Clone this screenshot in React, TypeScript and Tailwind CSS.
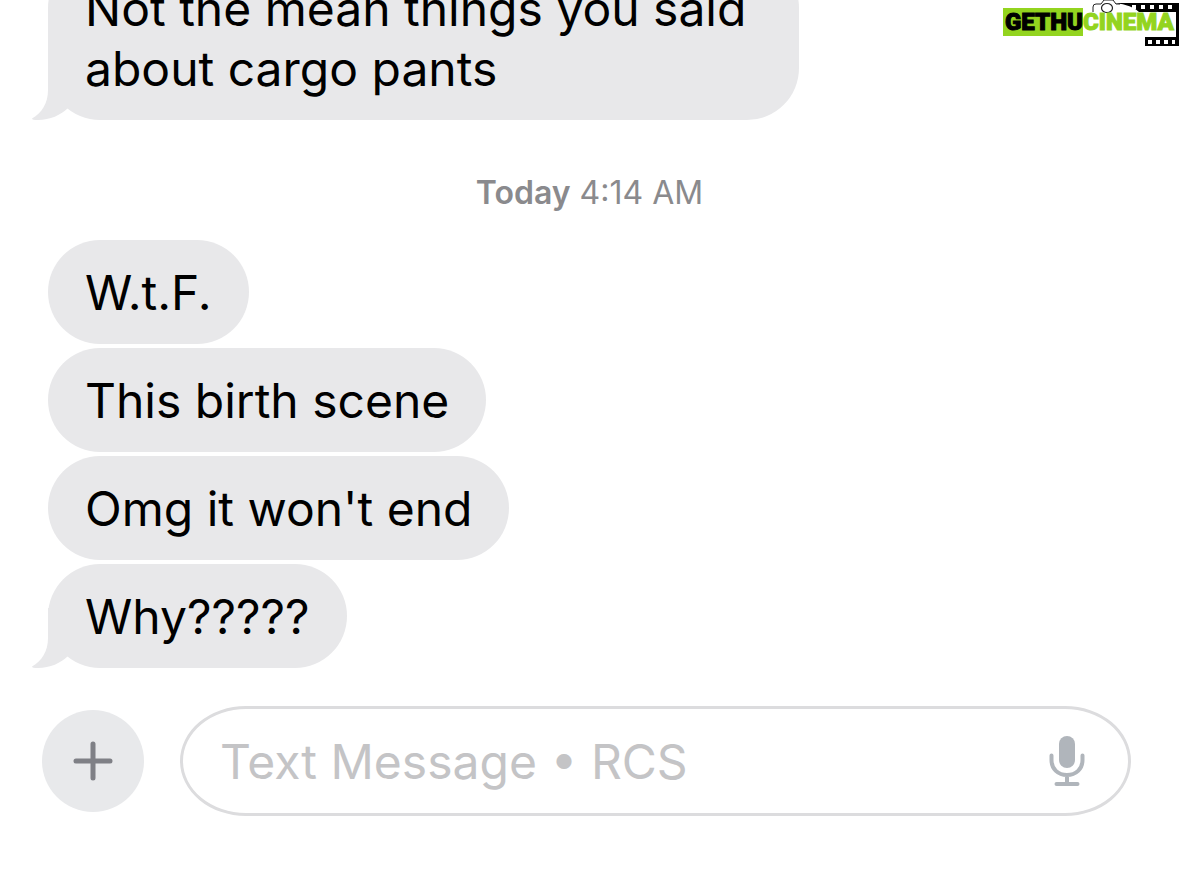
import type { ReactNode } from "react";

const messages = ["W.t.F.", "This birth scene", "Omg it won't end", "Why?????"];

function Tail() {
    return (
        <svg
            className="absolute bottom-0 -left-4"
            width="40"
            height="60"
            viewBox="0 0 40 60"
            fill="#e8e8ea"
            aria-hidden="true"
        >
            <path d="M16 0V30C16 43 10 53 0 58.500C0 59.500 2 60 6 60C18 60 29 55 36 48L40 40V0Z" />
        </svg>
    );
}

function Bubble({ children, tail = false }: { children: ReactNode; tail?: boolean }) {
    return (
        <li className="relative w-fit max-w-[751px] rounded-[52px] bg-[#e8e8ea] px-[37px] pt-[23px] pb-[21px] text-[48px] leading-[60px] text-black">
            {tail && <Tail />}
            <p className="relative">{children}</p>
        </li>
    );
}

function Watermark() {
    return (
        <div className="absolute top-0 right-0 h-12 w-44">
            <svg className="absolute inset-0" width="176" height="48" viewBox="0 0 176 48" fill="none" aria-hidden="true">
                <path d="M90 12V7Q90 4 93 4H98L101 0H110L113 4H117" stroke="#222" strokeWidth="1" />
                <ellipse cx="104" cy="8" rx="5.500" ry="4.500" stroke="#222" strokeWidth="1.200" />
                <path d="M112 3H176V46H142V37H173V12H136Q129 5 112 3Z" fill="#000" />
                <path
                    d="M129 5h4v4h-4zM138 5h4v4h-4zM147 5h4v4h-4zM156 5h4v4h-4zM165 5h4v4h-4zM145 40h4v4h-4zM153 40h4v4h-4zM161 40h4v4h-4zM169 40h3v4h-3z"
                    fill="#fff"
                />
            </svg>
            <p className="relative mt-2 flex font-[Roboto,sans-serif] text-[24px] leading-7 font-black">
                <span className="bg-[#93d41f] pl-0.5 text-black [-webkit-text-stroke:1px_#000]">GETHU</span>
                <span className="text-[#93d41f] [-webkit-text-stroke:1px_#93d41f]">CINEMA</span>
            </p>
        </div>
    );
}

function Composer() {
    return (
        <form className="mt-[38px] flex items-center gap-9 pr-12 pl-[42px]">
            <button
                type="button"
                aria-label="Add attachment"
                className="flex size-[102px] shrink-0 items-center justify-center rounded-full bg-[#e8e9eb]"
            >
                <svg width="40" height="40" viewBox="0 0 40 40" stroke="#7f8086" strokeWidth="5" strokeLinecap="round">
                    <path d="M20 3V37M3 20H37" />
                </svg>
            </button>
            <div className="flex h-[110px] min-w-0 flex-1 items-center rounded-[66px/55px] border-3 border-[#dcdcde] pr-[43px] pl-[37px]">
                <input
                    type="text"
                    aria-label="Message"
                    placeholder="Text Message • RCS"
                    className="min-w-0 flex-1 pt-0.5 text-[48px] leading-[60px] text-black outline-none placeholder:text-[#c4c4c6]"
                />
                <button type="button" aria-label="Dictate" className="shrink-0">
                    <svg width="36" height="52" viewBox="0 0 36 52" fill="none" stroke="#b0b5bb" strokeLinecap="round">
                        <rect x="10" y="1" width="16" height="32" rx="8" fill="#b0b5bb" stroke="none" />
                        <path d="M2.500 20.500V25C2.500 34 9 40 18 40S33.500 34 33.500 25V20.500M18 40V49M7.500 49H28.500" strokeWidth="4" />
                    </svg>
                </button>
            </div>
        </form>
    );
}

export default function App() {
    return (
        <main className="relative flex min-h-screen flex-col overflow-hidden bg-white font-[Inter,sans-serif]">
            <ul className="-mt-11 pl-12">
                <Bubble tail>Not the mean things you said about cargo pants</Bubble>
            </ul>
            <p className="mt-[53px] text-center text-[32px] leading-10 text-[#8a8a8d]">
                <span className="font-semibold">Today</span> 4:14 AM
            </p>
            <ul className="mt-[27px] flex flex-col gap-1 pl-12">
                {messages.map((text, i) => (
                    <Bubble key={text} tail={i === messages.length - 1}>
                        {text}
                    </Bubble>
                ))}
            </ul>
            <Composer />
            <Watermark />
        </main>
    );
}
